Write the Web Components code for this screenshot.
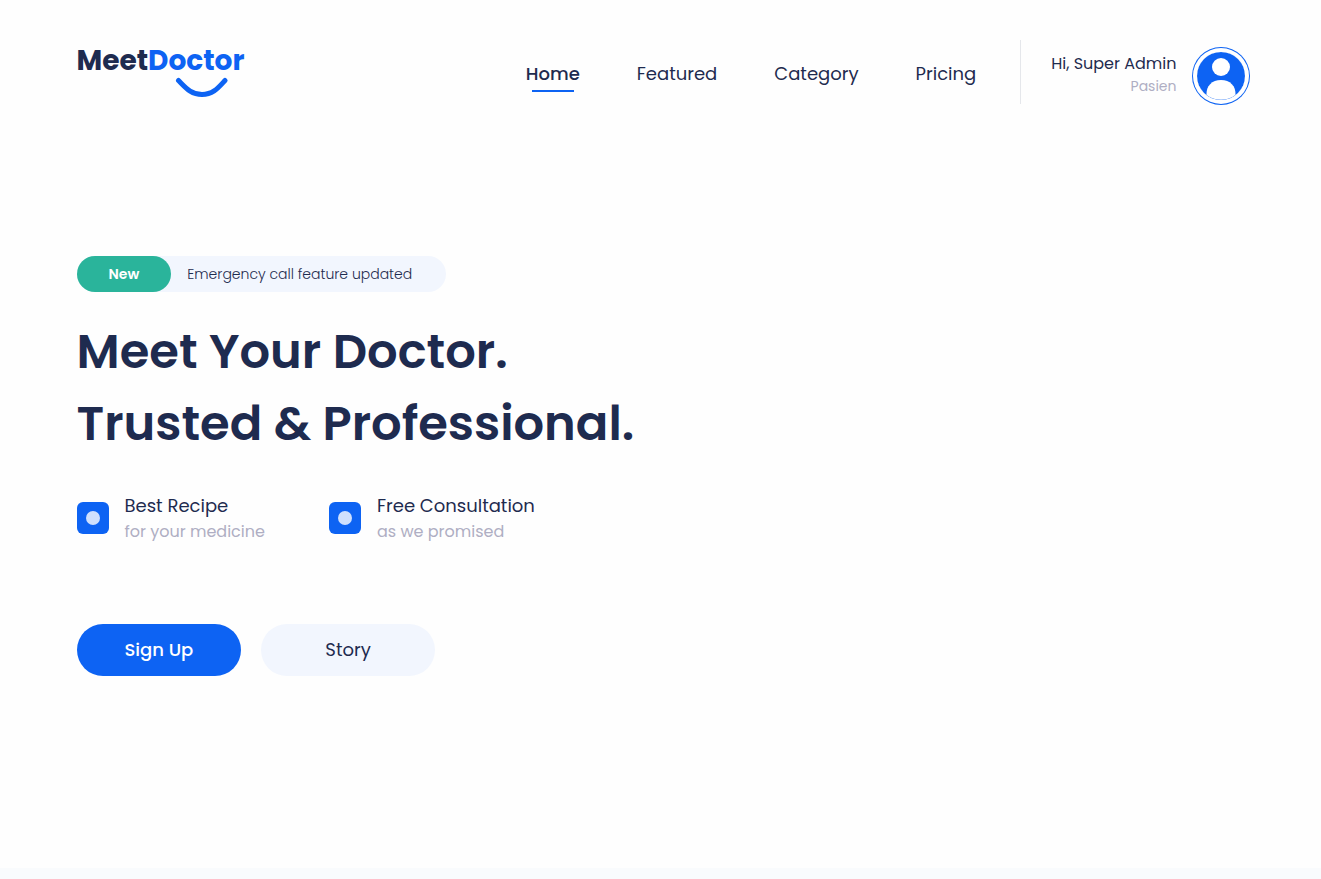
<!DOCTYPE html>
<html lang="en">
<head>
<meta charset="utf-8">
<meta name="viewport" content="width=device-width, initial-scale=1">
<title>MeetDoctor</title>
<style>
  :root { --navy: #1e2b4f; --blue: #0d63f3; --mist: #f2f6fe; --grey: #afaec3; --green: #2ab49b; }
  body { margin: 0; background: #fefefe; color: var(--navy); font-family: Poppins, Inter, sans-serif; }
</style>
</head>
<body>
<md-page>
  <md-header slot="header">
    <md-nav-link href="#home" active>Home</md-nav-link>
    <md-nav-link href="#featured">Featured</md-nav-link>
    <md-nav-link href="#category">Category</md-nav-link>
    <md-nav-link href="#pricing">Pricing</md-nav-link>
    <md-profile slot="profile"><span>Hi, Super Admin</span><span slot="role">Pasien</span></md-profile>
  </md-header>
  <md-hero>
    <md-notice slot="notice" label="New">Emergency call feature updated</md-notice>
    <span slot="line1">Meet Your Doctor.</span>
    <span slot="line2">Trusted &amp; Professional.</span>
    <md-benefit slot="benefits">Best Recipe<span slot="note">for your medicine</span></md-benefit>
    <md-benefit slot="benefits">Free Consultation<span slot="note">as we promised</span></md-benefit>
    <md-button slot="actions" primary>Sign Up</md-button>
    <md-button slot="actions">Story</md-button>
  </md-hero>
</md-page>
<script>
const define = (name, html) => {
  const template = document.createElement('template');
  template.innerHTML = html;
  customElements.define(name, class extends HTMLElement {
    constructor() {
      super();
      this.attachShadow({ mode: 'open' }).append(template.content.cloneNode(true));
    }
    connectedCallback() {
      const link = this.shadowRoot.querySelector('a');
      if (link && this.hasAttribute('href')) link.href = this.getAttribute('href');
      const label = this.shadowRoot.querySelector('.label');
      if (label) label.textContent = this.getAttribute('label');
    }
  });
};

define('md-page', `
  <style>
    :host { display: flex; flex-direction: column; min-height: 100vh; }
    .wrap { box-sizing: border-box; width: 100%; max-width: 1280px; margin: 0 auto; padding: 0 56px; }
    .next { flex: 1; background: #f9fbfd; }
  </style>
  <div class="wrap"><slot name="header"></slot><main><slot></slot></main></div>
  <div class="next"></div>`);

define('md-logo', `
  <style>
    :host { display: block; }
    a { display: flex; flex-direction: column; color: inherit; text-decoration: none; font-size: 28px; line-height: 32px; font-weight: 700; }
    b { color: var(--blue); font-weight: inherit; }
    svg { display: block; margin-left: 98px; }
  </style>
  <a href="#home"><span>Meet<b>Doctor</b></span>
    <svg width="54" height="22" viewBox="0 0 54 22" fill="none" aria-hidden="true">
      <path d="M3.500 3.500C11 11 16 17.500 27 17.500C38 17.500 43 11 50 3.500" stroke="#0d63f3" stroke-width="5" stroke-linecap="round"/>
    </svg></a>`);

define('md-header', `
  <style>
    :host { display: flex; align-items: center; justify-content: space-between; padding: 40px 0; }
    .right, nav { display: flex; align-items: center; }
    nav { gap: 57px; }
    .rule { width: 1px; height: 64px; margin: 0 30px 0 44px; background: #e5e7eb; }
  </style>
  <md-logo></md-logo>
  <div class="right"><nav><slot></slot></nav><div class="rule"></div><slot name="profile"></slot></div>`);

define('md-nav-link', `
  <style>
    :host { display: block; }
    a { position: relative; display: block; padding: 10px 0 6px; color: inherit; text-decoration: none; font-size: 18px; line-height: 28px; }
    :host([active]) a { font-weight: 500; }
    :host([active]) a::after { content: ""; position: absolute; bottom: 2px; left: 6px; right: 6px; height: 2px; background: var(--blue); }
  </style>
  <a><slot></slot></a>`);

define('md-profile', `
  <style>
    :host { display: flex; align-items: center; gap: 20px; padding-top: 8px; }
    .text { text-align: right; font-size: 16px; line-height: 24px; padding-bottom: 4px; }
    .role { color: var(--grey); font-size: 14px; line-height: 20px; }
    svg { display: block; border-radius: 50%; box-shadow: 0 0 0 4px #fff, 0 0 0 5px var(--blue); }
  </style>
  <div class="text"><div><slot></slot></div><div class="role"><slot name="role"></slot></div></div>
  <svg width="48" height="48" viewBox="0 0 48 48" role="img" aria-label="Profile">
    <circle cx="24" cy="24" r="24" fill="#0d63f3"/>
    <circle cx="24" cy="15" r="9" fill="#fff"/>
    <path d="M9.500 43C9 34 15 28 24 28S39 34 38.500 43C35 46 29.500 47.700 24 47.700S13 46 9.500 43Z" fill="#fff"/>
  </svg>`);

define('md-hero', `
  <style>
    :host { display: block; padding: 112px 0 192px; }
    h1 { margin: 24px 0 32px; font-size: 48px; line-height: 72px; font-weight: 600; }
    h1 span { display: block; }
    .benefits { display: flex; gap: 64px; }
    .actions { display: flex; gap: 20px; margin-top: 80px; }
  </style>
  <slot name="notice"></slot>
  <h1><span><slot name="line1"></slot></span><span><slot name="line2"></slot></span></h1>
  <div class="benefits"><slot name="benefits"></slot></div>
  <div class="actions"><slot name="actions"></slot></div>`);

define('md-notice', `
  <style>
    :host { display: flex; align-items: center; width: fit-content; gap: 16px; padding-right: 34px; border-radius: 18px; background: var(--mist); font-size: 14px; line-height: 20px; font-weight: 300; }
    .label { padding: 8px 32px; border-radius: 18px; background: var(--green); color: #fff; font-weight: 600; }
  </style>
  <span class="label"></span><span><slot></slot></span>`);

define('md-benefit', `
  <style>
    :host { display: flex; align-items: center; gap: 16px; }
    .title { font-size: 18px; line-height: 28px; }
    .note { font-size: 16px; line-height: 24px; color: var(--grey); }
  </style>
  <svg width="32" height="32" viewBox="0 0 32 32" aria-hidden="true"><rect width="32" height="32" rx="6" fill="#0d63f3"/><circle cx="16" cy="16" r="7" fill="#cfe0fd"/></svg>
  <div><div class="title"><slot></slot></div><div class="note"><slot name="note"></slot></div></div>`);

define('md-button', `
  <style>
    :host { display: block; }
    button { padding: 12px 64px; border: 0; border-radius: 26px; background: var(--mist); color: inherit; font: inherit; font-size: 18px; line-height: 28px; cursor: pointer; }
    :host([primary]) button { padding: 12px 48px; background: var(--blue); color: #fff; font-weight: 500; }
  </style>
  <button type="button"><slot></slot></button>`);
</script>
</body>
</html>
